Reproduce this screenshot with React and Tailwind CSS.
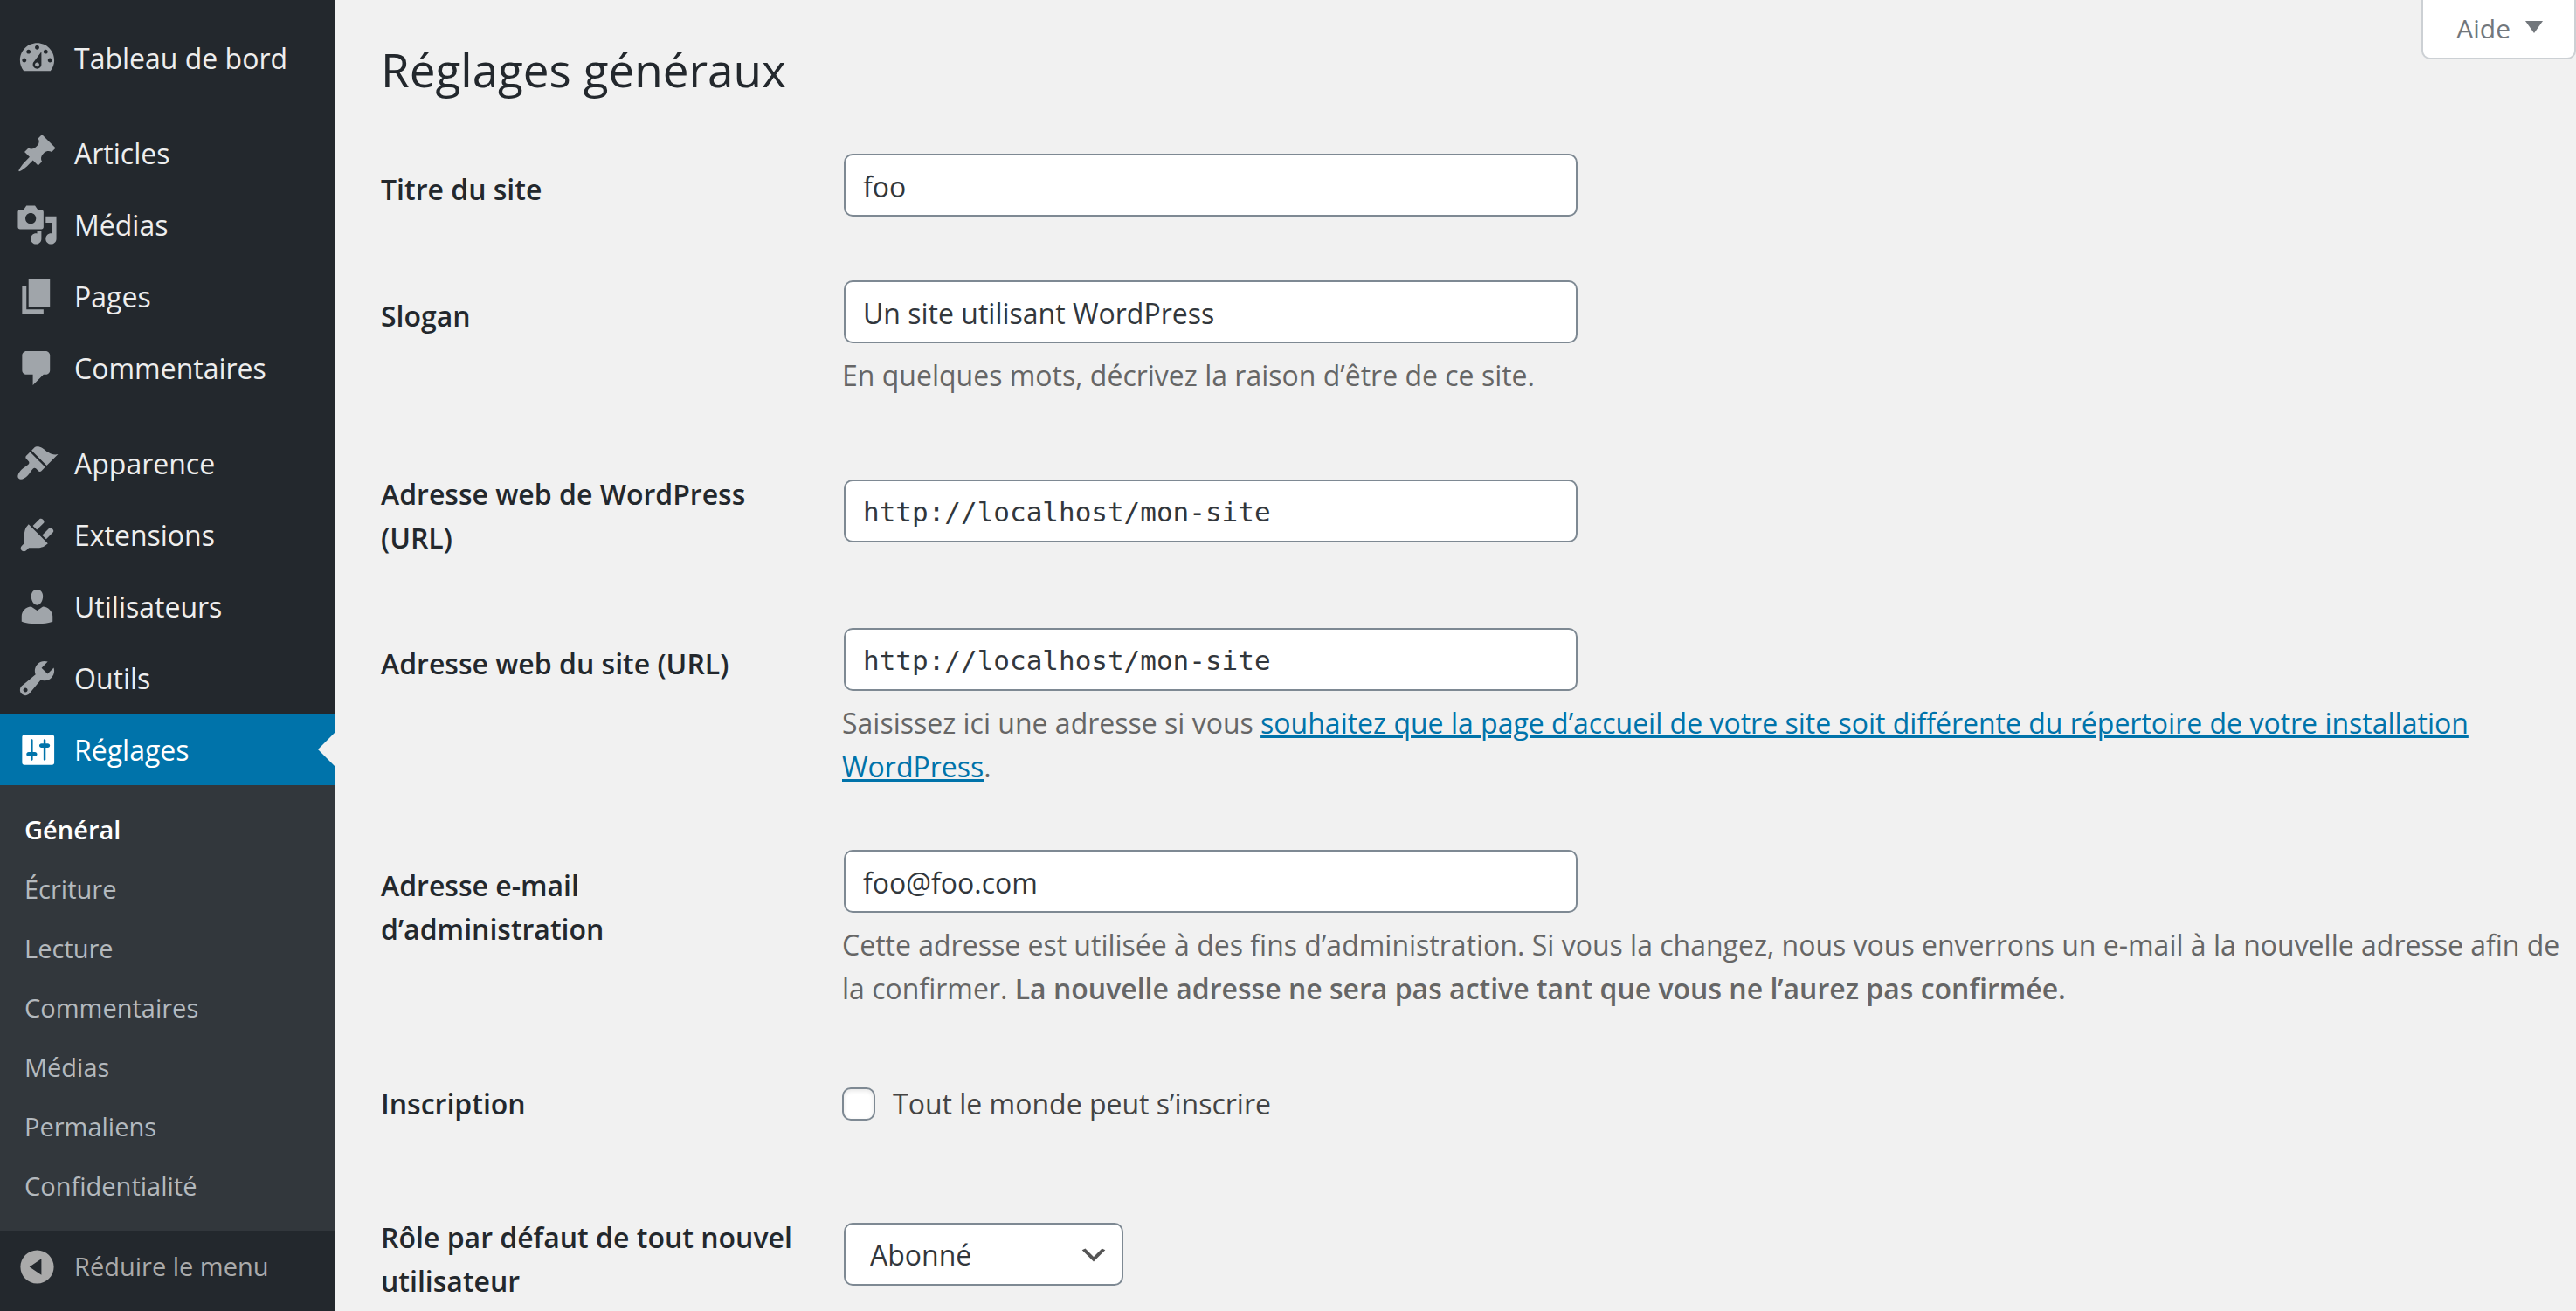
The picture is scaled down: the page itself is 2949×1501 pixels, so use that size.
const icons = {
  dashboard:
    'M3.76 16h12.48c1.1-1.37 1.76-3.11 1.76-5 0-4.42-3.58-8-8-8s-8 3.58-8 8c0 1.89.66 3.63 1.76 5zM10 4c.55 0 1 .45 1 1s-.45 1-1 1-1-.45-1-1 .45-1 1-1zM6 6c.55 0 1 .45 1 1s-.45 1-1 1-1-.45-1-1 .45-1 1-1zm8 0c.55 0 1 .45 1 1s-.45 1-1 1-1-.45-1-1 .45-1 1-1zm-5.37 5.55L12 7v6c0 1.1-.9 2-2 2s-2-.9-2-2c0-.57.24-1.08.63-1.45zM4 10c.55 0 1 .45 1 1s-.45 1-1 1-1-.45-1-1 .45-1 1-1zm12 0c.55 0 1 .45 1 1s-.45 1-1 1-1-.45-1-1 .45-1 1-1zm-5 3c0-.55-.45-1-1-1s-1 .45-1 1 .45 1 1 1 1-.45 1-1z',
  post: 'M10.44 3.02l1.82-1.82 6.36 6.35-1.83 1.82c-1.05-.68-2.48-.57-3.41.36l-.75.75c-.92.93-1.04 2.35-.35 3.41l-1.83 1.82-2.41-2.41-2.8 2.79c-.42.42-3.38 2.71-3.8 2.29s1.86-3.39 2.28-3.81l2.79-2.79L4.1 9.36l1.83-1.82c1.05.69 2.48.57 3.4-.36l.75-.75c.93-.92 1.05-2.35.36-3.41z',
  media:
    'M13 11V4c0-.55-.45-1-1-1h-1.67L9 1H5L3.67 3H2c-.55 0-1 .45-1 1v7c0 .55.45 1 1 1h10c.55 0 1-.45 1-1zM7 4.5c1.38 0 2.5 1.12 2.5 2.5S8.38 9.5 7 9.5 4.5 8.38 4.5 7 5.62 4.5 7 4.5zM14 6h5v10.5c0 1.38-1.12 2.5-2.5 2.5S14 17.88 14 16.5s1.12-2.5 2.5-2.5c.17 0 .34.02.5.05V9h-3V6zm-4 8.05V13h2v3.5c0 1.38-1.12 2.5-2.5 2.5S7 17.88 7 16.5 8.12 14 9.5 14c.17 0 .34.02.5.05z',
  page: 'M6 15V2h10v13H6zm-1 1h8v2H3V5h2v11z',
  comments:
    'M5 2h9c1.1 0 2 .9 2 2v7c0 1.1-.9 2-2 2h-1l-5 5v-5H5c-1.1 0-2-.9-2-2V4c0-1.1.9-2 2-2z',
  appearance:
    'M14.48 11.06L7.41 3.99l1.5-1.5c.5-.56 2.3-.47 3.51.32 1.21.8 1.43 1.28 2.91 2.1 1.18.64 2.45 1.26 4.45.85zm-.71.71L6.7 4.7 4.93 6.47c-.39.39-.39 1.02 0 1.41l1.06 1.06c.39.39.39 1.03 0 1.42-.6.6-1.43 1.11-2.21 1.69-.35.26-.7.53-1.01.84C1.43 14.23.4 16.08 1.4 17.07c.99 1 2.84-.03 4.18-1.36.31-.31.58-.66.85-1.02.57-.78 1.08-1.61 1.69-2.21.39-.39 1.02-.39 1.41 0l1.06 1.06c.39.39 1.02.39 1.41 0z',
  plugins:
    'M13.11 4.36L9.87 7.6 8 5.73l3.24-3.24c.35-.34 1.05-.2 1.56.32.52.51.66 1.21.31 1.55zm-8 1.77l.91-1.12 9.01 9.01-1.19.84c-.71.71-2.63 1.16-3.82 1.16H6.14L4.9 17.26c-.59.59-1.54.59-2.12 0-.59-.58-.59-1.53 0-2.12l1.24-1.24v-3.88c0-1.13.4-3.19 1.09-3.89zm7.26 3.97l3.24-3.24c.34-.35 1.04-.21 1.55.31.52.51.66 1.21.31 1.55l-3.24 3.25z',
  users:
    'M10 9.25c-2.27 0-2.73-3.44-2.73-3.44C7 4.02 7.82 2 9.97 2c2.16 0 2.98 2.02 2.71 3.81 0 0-.41 3.44-2.68 3.44zm0 2.57L12.72 10c2.39 0 4.52 2.33 4.52 4.53v2.49s-3.65 1.13-7.24 1.13c-3.65 0-7.24-1.13-7.24-1.13v-2.49c0-2.25 1.94-4.48 4.47-4.48z',
  tools:
    'M16.68 9.77c-1.34 1.34-3.3 1.67-4.95.99l-5.41 6.52c-.99.99-2.59.99-3.58 0s-.99-2.59 0-3.57l6.52-5.42c-.68-1.65-.35-3.61.99-4.95 1.28-1.28 3.12-1.62 4.72-1.06l-2.89 2.89 2.82 2.82 2.86-2.87c.53 1.58.18 3.39-1.08 4.65zM3.81 16.21c.4.39 1.04.39 1.43 0 .4-.4.4-1.04 0-1.43-.39-.4-1.03-.4-1.43 0-.39.39-.39 1.03 0 1.43z',
  settings:
    'M18 16V4c0-.55-.45-1-1-1H4c-.55 0-1 .45-1 1v12c0 .55.45 1 1 1h13c.55 0 1-.45 1-1zM8 11h1c.55 0 1 .45 1 1s-.45 1-1 1H8v1.5c0 .28-.22.5-.5.5s-.5-.22-.5-.5V13H6c-.55 0-1-.45-1-1s.45-1 1-1h1V5.5c0-.28.22-.5.5-.5s.5.22.5.5V11zm5-2h-1c-.55 0-1-.45-1-1s.45-1 1-1h1V5.5c0-.28.22-.5.5-.5s.5.22.5.5V7h1c.55 0 1 .45 1 1s-.45 1-1 1h-1v5.5c0 .28-.22.5-.5.5s-.5-.22-.5-.5V9z',
  collapse:
    'M10 2.2c4.3 0 7.8 3.5 7.8 7.8s-3.5 7.8-7.8 7.8S2.200 14.300 2.200 10 5.700 2.200 10 2.200zM12 13.800V6.200L6.400 10z',
};

function Icon({ name }) {
  return (
    <svg viewBox="0 0 20 20" className="size-[49px] shrink-0" fill="currentColor" fillRule="evenodd" aria-hidden="true">
      <path d={icons[name]} />
    </svg>
  );
}

const menuGroups = [
  [['dashboard', 'Tableau de bord']],
  [
    ['post', 'Articles'],
    ['media', 'Médias'],
    ['page', 'Pages'],
    ['comments', 'Commentaires'],
  ],
  [
    ['appearance', 'Apparence'],
    ['plugins', 'Extensions'],
    ['users', 'Utilisateurs'],
    ['tools', 'Outils'],
  ],
];

const submenu = ['Écriture', 'Lecture', 'Commentaires', 'Médias', 'Permaliens', 'Confidentialité'];

function Sidebar() {
  return (
    <nav className="w-[383px] shrink-0 bg-[#23282d] pt-[25px] text-[32px] text-[#eeeeee]">
      <div className="flex flex-col gap-[27px]">
        {menuGroups.map((group, i) => (
          <ul key={i}>
            {group.map(([icon, label]) => (
              <li key={label}>
                <a href="#" className="flex h-[82px] items-center gap-[18px] pl-[18px]">
                  <span className="text-[#a0a5aa]">
                    <Icon name={icon} />
                  </span>
                  <span className="pt-[2px]">{label}</span>
                </a>
              </li>
            ))}
          </ul>
        ))}
      </div>
      <a
        href="#"
        aria-current="true"
        className="relative flex h-[82px] items-center gap-[18px] bg-[#0073aa] pl-[18px] text-white"
      >
        <Icon name="settings" />
        <span className="pt-[2px]">Réglages</span>
        <span className="absolute top-[22px] right-0 border-y-[19px] border-r-[19px] border-y-transparent border-r-[#f1f1f1]" />
      </a>
      <ul className="bg-[#32373c] py-[17px] text-[29px] text-[#b4b9be]">
        <li>
          <a href="#" aria-current="page" className="flex h-[68px] items-center pl-7 font-semibold text-white">
            Général
          </a>
        </li>
        {submenu.map((label) => (
          <li key={label}>
            <a href="#" className="flex h-[68px] items-center pl-7">
              {label}
            </a>
          </li>
        ))}
      </ul>
      <button type="button" className="flex h-[82px] w-full items-center gap-[18px] pl-[18px] text-[29px] text-[#aaaaaa]">
        <Icon name="collapse" />
        Réduire le menu
      </button>
    </nav>
  );
}

function Row({ label, htmlFor, children }) {
  return (
    <div className="grid grid-cols-[528px_1fr]">
      <div className="pt-[53px] pr-[50px] pb-[41px] font-semibold text-[#23282d]">
        {htmlFor ? <label htmlFor={htmlFor}>{label}</label> : <span>{label}</span>}
      </div>
      <div className="self-center">{children}</div>
    </div>
  );
}

function Field({ id, value, type = 'text', mono = false }) {
  return (
    <input
      id={id}
      type={type}
      defaultValue={value}
      className={
        mono
          ? 'ml-[2px] block h-[72px] w-[840px] max-w-full rounded-[10px] border-2 border-[#7e8993] bg-white px-5 pt-[2px] font-["DejaVu_Sans_Mono",monospace] text-[31px] text-[#32373c]'
          : 'ml-[2px] block h-[72px] w-[840px] max-w-full rounded-[10px] border-2 border-[#7e8993] bg-white px-5 pt-[2px] text-[#32373c]'
      }
    />
  );
}

function Description({ children }) {
  return <p className="mt-3 text-[#666666]">{children}</p>;
}

export default function App() {
  return (
    <div className='flex h-screen overflow-hidden bg-[#f1f1f1] font-["Open_Sans",sans-serif] text-[32px] leading-[50px]'>
      <Sidebar />
      <main className="min-w-0 flex-1 pl-[53px]">
        <header className="flex h-[139px] items-start justify-between">
          <h1 className="pt-[44px] text-[53px] leading-[72px] text-[#23282d]">Réglages généraux</h1>
          <button
            type="button"
            className="flex h-[68px] items-center gap-[17px] rounded-b-[10px] border-2 border-t-0 border-[#ccd0d4] bg-white pr-[36px] pl-[38px] text-[30px] text-[#72777c]"
          >
            Aide
            <span className="mb-1 border-x-[10px] border-t-[14px] border-x-transparent border-t-[#72777c]" />
          </button>
        </header>
        <form className="pr-2">
          <Row label="Titre du site" htmlFor="blogname">
            <div className="pt-[37px] pb-9">
              <Field id="blogname" value="foo" />
            </div>
          </Row>
          <Row label="Slogan" htmlFor="blogdescription">
            <div className="pt-[37px] pb-[33px]">
              <Field id="blogdescription" value="Un site utilisant WordPress" />
              <Description>En quelques mots, décrivez la raison d’être de ce site.</Description>
            </div>
          </Row>
          <Row label="Adresse web de WordPress (URL)" htmlFor="siteurl">
            <Field id="siteurl" type="url" value="http://localhost/mon-site" mono />
          </Row>
          <Row label="Adresse web du site (URL)" htmlFor="home">
            <div className="pt-[37px] pb-[33px]">
              <Field id="home" type="url" value="http://localhost/mon-site" mono />
              <Description>
                Saisissez ici une adresse si vous{' '}
                <a href="#" className="text-[#0073aa] underline">
                  souhaitez que la page d’accueil de votre site soit différente du répertoire de votre installation
                  WordPress
                </a>
                .
              </Description>
            </div>
          </Row>
          <Row label="Adresse e-mail d’administration" htmlFor="admin_email">
            <div className="pt-[37px] pb-[29px]">
              <Field id="admin_email" type="email" value="foo@foo.com" />
              <Description>
                Cette adresse est utilisée à des fins d’administration. Si vous la changez, nous vous enverrons un
                e-mail à la nouvelle adresse afin de la confirmer.{' '}
                <strong className="font-semibold">
                  La nouvelle adresse ne sera pas active tant que vous ne l’aurez pas confirmée.
                </strong>
              </Description>
            </div>
          </Row>
          <Row label="Inscription">
            <label className="flex items-center gap-5 pt-[53px] pb-[50px] text-[#444444]">
              <input
                type="checkbox"
                className="size-[38px] appearance-none rounded-[10px] border-2 border-[#7e8993] bg-white shadow-[inset_0_2px_5px_rgba(0,0,0,0.1)]"
              />
              Tout le monde peut s’inscrire
            </label>
          </Row>
          <Row label="Rôle par défaut de tout nouvel utilisateur" htmlFor="default_role">
            <div className="relative ml-[2px] w-[320px]">
              <select
                id="default_role"
                className="block h-[72px] w-full appearance-none rounded-[10px] border-2 border-[#7e8993] bg-white px-[28px] pt-[2px] text-[#32373c]"
              >
                <option>Abonné</option>
              </select>
              <svg
                viewBox="0 0 20 20"
                className="pointer-events-none absolute top-[18px] right-[15px] size-[38px]"
                fill="#555555"
                aria-hidden="true"
              >
                <path d="M5 6l5 5 5-5 2 1-7 7-7-7 2-1z" />
              </svg>
            </div>
          </Row>
        </form>
      </main>
    </div>
  );
}
